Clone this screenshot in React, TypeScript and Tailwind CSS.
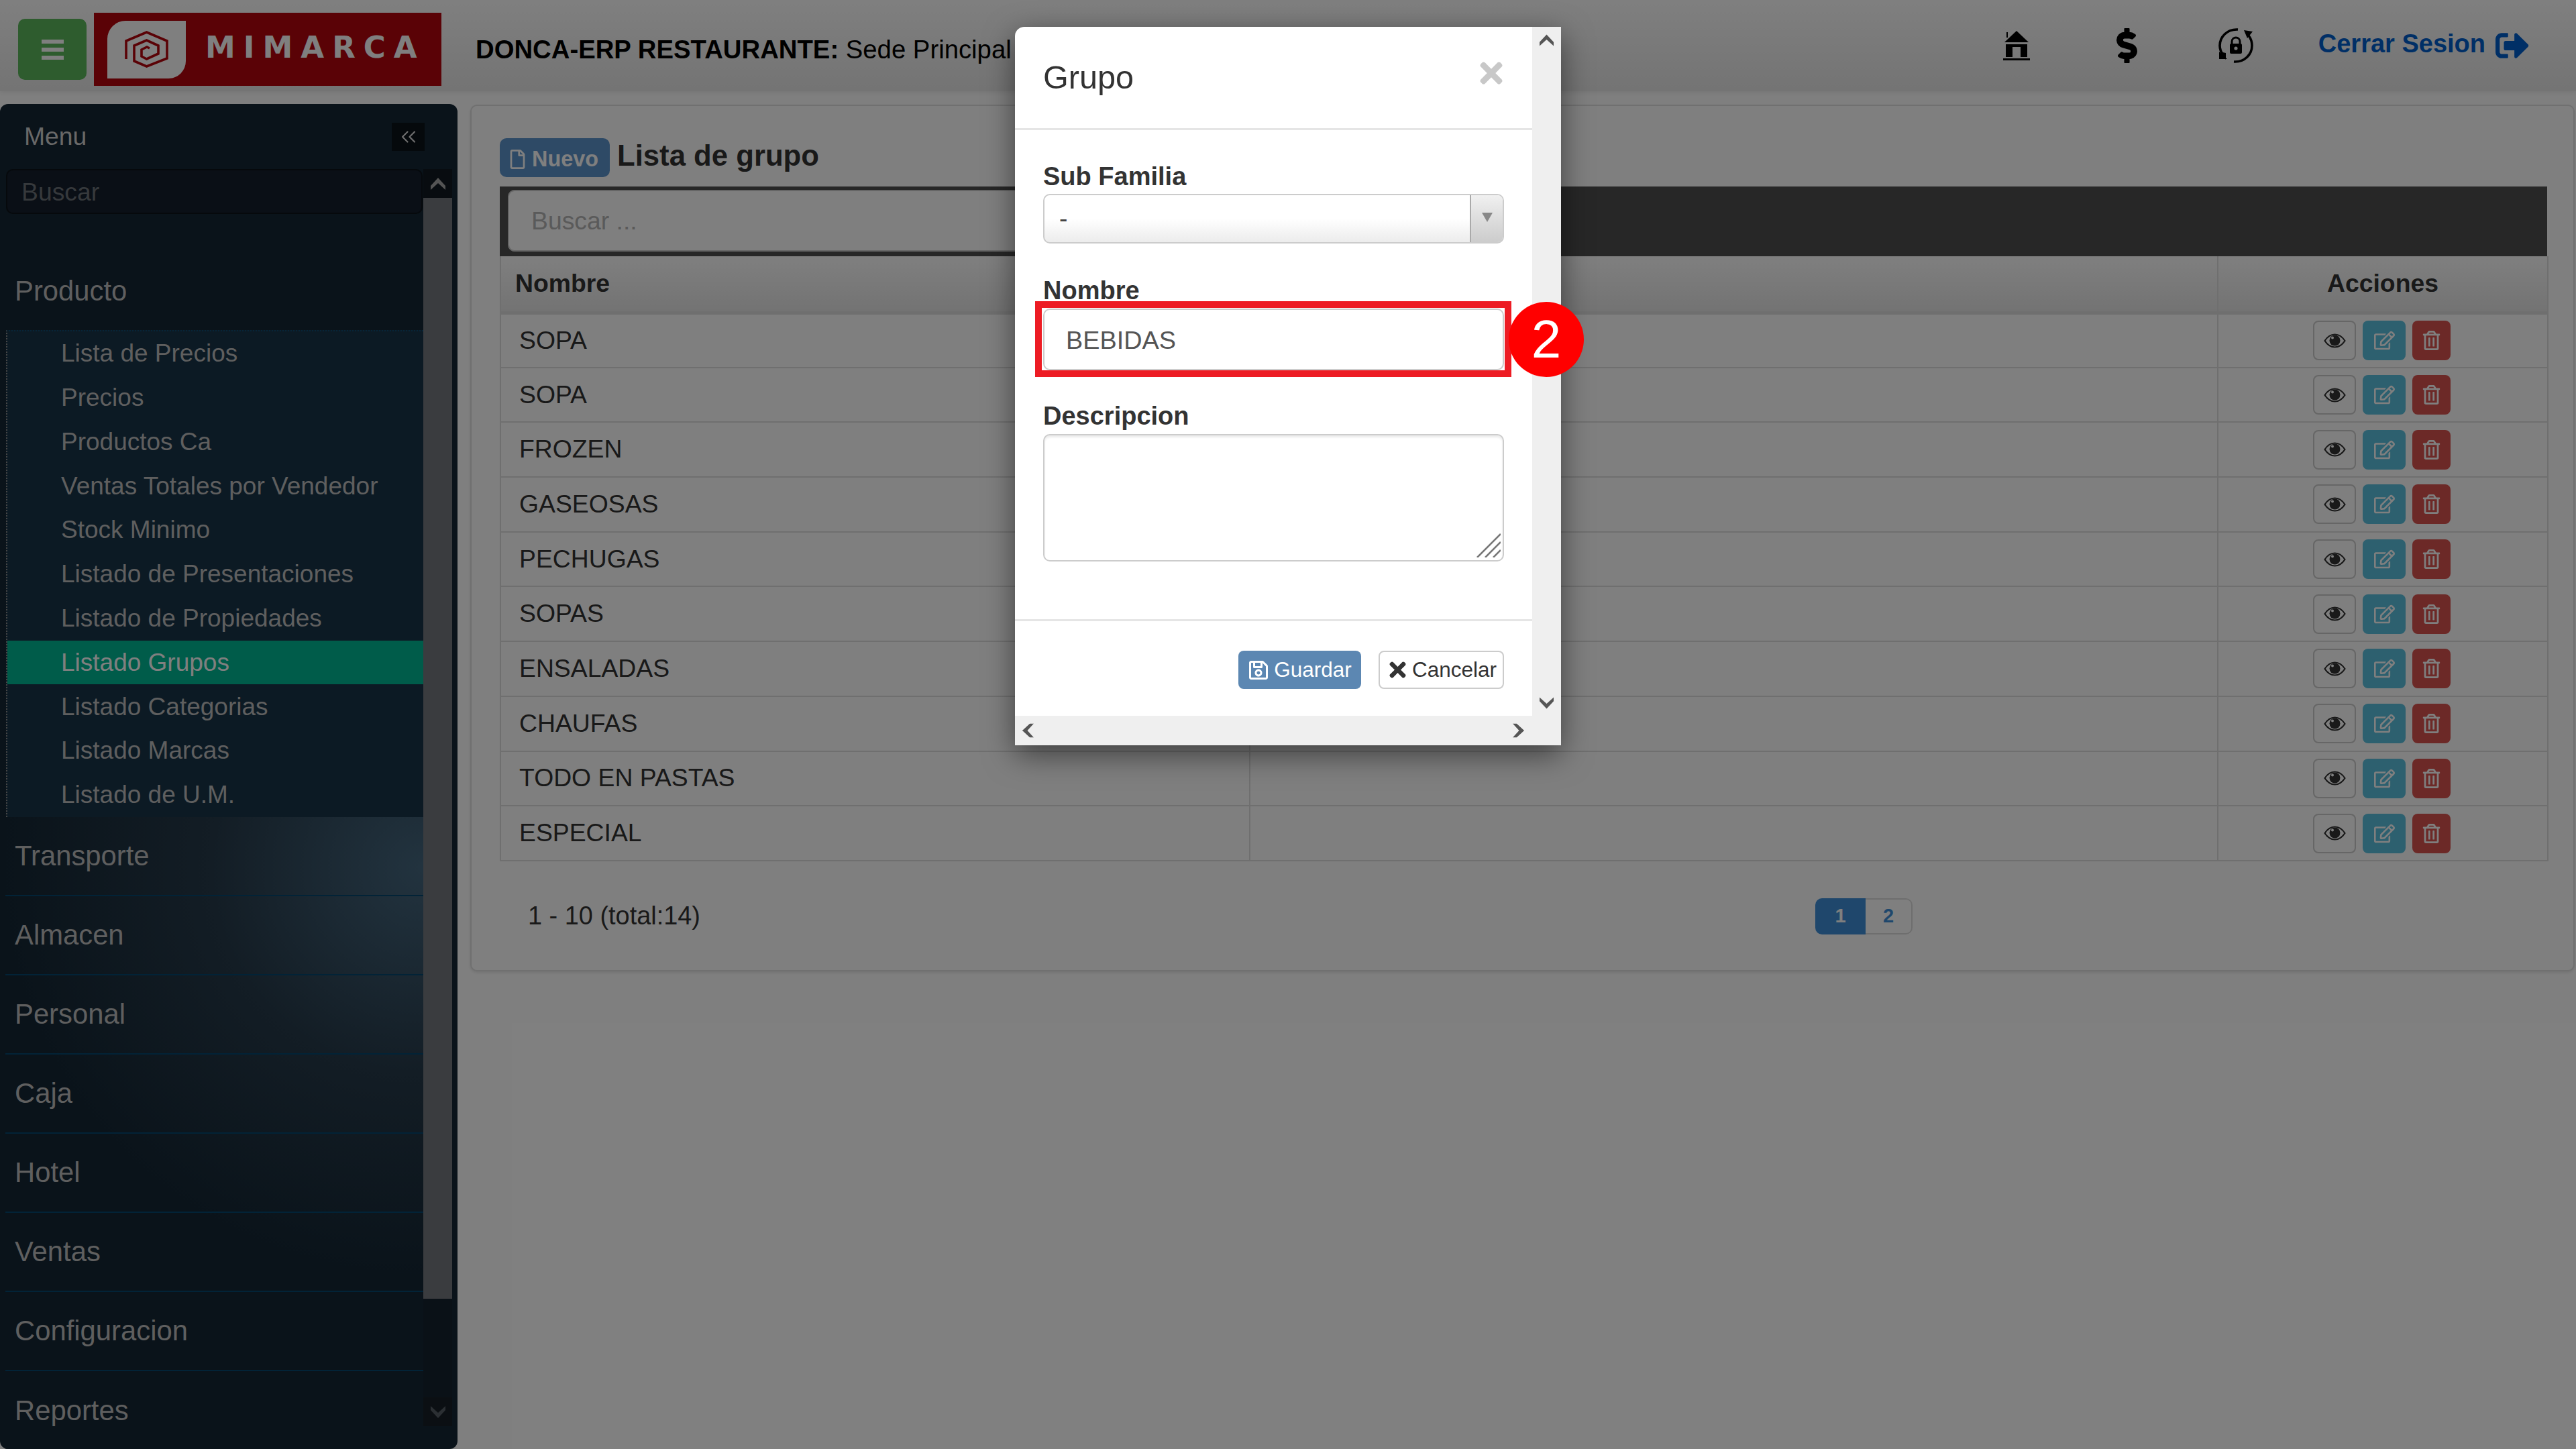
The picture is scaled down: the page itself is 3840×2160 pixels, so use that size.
import React from "react";
import { ChevronsLeft } from "lucide-react";
import {
	FaDollarSign,
	FaRegEdit,
	FaRegFile,
	FaRegSave,
	FaRegTrashAlt,
	FaSignOutAlt,
	FaTimes,
} from "react-icons/fa";

const subItems = [
	"Lista de Precios",
	"Precios",
	"Productos Ca",
	"Ventas Totales por Vendedor",
	"Stock Minimo",
	"Listado de Presentaciones",
	"Listado de Propiedades",
	"Listado Grupos",
	"Listado Categorias",
	"Listado Marcas",
	"Listado de U.M.",
];

const menuItems = ["Transporte", "Almacen", "Personal", "Caja", "Hotel", "Ventas", "Configuracion", "Reportes"];

const rows = ["SOPA", "SOPA", "FROZEN", "GASEOSAS", "PECHUGAS", "SOPAS", "ENSALADAS", "CHAUFAS", "TODO EN PASTAS", "ESPECIAL"];

const HomeIcon = () => (
	<svg viewBox="0 0 40 44" className="w-[40px] h-[44px]" fill="#000">
		<path d="M20 0 L38 17 L2 17 Z" />
		<rect x="5" y="2" width="2" height="8" />
		<path fillRule="evenodd" d="M4 20 H36 V39 H26 V24 H14 V39 H4 Z" />
		<rect x="0" y="41" width="40" height="3" />
	</svg>
);

const LockRefreshIcon = () => (
	<svg viewBox="0 0 54 54" className="w-[54px] h-[54px]">
		<path d="M30 3 C14 2 3 14 3 27 C3 32 5 37 8 41" fill="none" stroke="#000" strokeWidth="3.6" />
		<path d="M2 36 L14 47 L2 47 Z M3 36 L12 38 L12 48 Z" fill="#000" />
		<path d="M24 51 C40 52 51 40 51 27 C51 21 49 16 46 12" fill="none" stroke="#000" strokeWidth="3.6" />
		<path d="M39 4 L52 6 L44 16 Z" fill="#000" />
		<path d="M21 25 V21 C21 13 33 13 33 21 V25" fill="none" stroke="#000" strokeWidth="3" />
		<rect x="18" y="24" width="18" height="15" rx="2" fill="#000" />
		<circle cx="27" cy="31" r="2.6" fill="#f2f2f2" />
	</svg>
);

const EyeIcon = () => (
	<svg viewBox="0 0 33 22" className="w-[33px] h-[22px]">
		<path d="M1.5 11 C6 4 11 1.5 16.5 1.5 C22 1.5 27 4 31.5 11 C27 18 22 20.5 16.5 20.5 C11 20.5 6 18 1.5 11 Z" fill="none" stroke="#333" strokeWidth="2.2" />
		<circle cx="16.5" cy="10.5" r="8" fill="#333" />
		<circle cx="13" cy="6.5" r="2" fill="#fff" />
	</svg>
);

const LogoMark = () => (
	<svg viewBox="0 0 117 86" className="w-[117px] h-[86px]">
		<path d="M27 0 H117 V60 A26 26 0 0 1 91 86 H0 V27 A27 27 0 0 1 27 0 Z" fill="#fff" />
		<path
			d="M28 57 V30 L58.6 17 L89 30 V56 L58.6 68 L40 60 V37 L58.6 29 L76 37 V49 L58.6 57 L51 53 V43 L59 39 L63 41"
			fill="none"
			stroke="#b4040c"
			strokeWidth="3.6"
		/>
	</svg>
);

const GripIcon = () => (
	<svg viewBox="0 0 36 36" className="absolute right-[3px] bottom-[4px] w-[36px] h-[36px]" stroke="#777" strokeWidth="2.6">
		<path d="M1 36 L36 1 M13 36 L36 13 M25 36 L36 25" />
	</svg>
);

// scrollbar arrow, points up, rotate it for the other directions
const ScrollArrow = ({ className }: { className: string }) => (
	<svg viewBox="0 0 22 18" className={className} fill="currentColor">
		<path d="M11 0 L22 12 L22 18 L11 8 L0 18 L0 12 Z" />
	</svg>
);

export default function App() {
	return (
		<div className="relative w-screen h-screen overflow-hidden bg-white font-['Liberation_Sans',sans-serif] text-[37.33px] text-[#333]">
			<header className="flex items-center h-[136px] pt-[11px] pl-[27px] pr-[70px] bg-gradient-to-b from-white to-[#e8e8e8] shadow-[0_2px_8px_rgba(0,0,0,0.08)]">
				<button className="flex flex-col items-center justify-center gap-[6px] w-[102px] h-[91px] rounded-[10px] bg-[#5cb85c]">
					<span className="w-[33px] h-[6px] bg-white" />
					<span className="w-[33px] h-[6px] bg-white" />
					<span className="w-[33px] h-[6px] bg-white" />
				</button>
				<div className="flex items-center w-[518px] h-[109px] ml-[11px] pl-[20px] bg-[#b4040c]">
					<LogoMark />
					<span className="ml-[29px] mb-[6px] font-['DejaVu_Sans',sans-serif] text-[45px] leading-none font-bold tracking-[12px] text-white">MIMARCA</span>
				</div>
				<div className="ml-[51px] pt-[1px] text-black text-[38.3px] whitespace-nowrap">
					<span className="font-bold">DONCA-ERP RESTAURANTE: </span>
					<span>Sede Principal</span>
				</div>
				<div className="flex items-center ml-auto mb-[11px]">
					<HomeIcon />
					<FaDollarSign className="w-[35px] h-[52px] ml-[127px] text-black" stroke="#000" strokeWidth={16} />
					<div className="ml-[118px]">
						<LockRefreshIcon />
					</div>
					<span className="ml-[96px] mb-[6px] font-bold text-[38px] text-[#005ecc] whitespace-nowrap">Cerrar Sesion</span>
					<FaSignOutAlt className="w-[50px] h-[50px] ml-[15px] text-[#005ecc]" />
				</div>
			</header>

			<div className="flex pt-[19px]">
				<aside className="flex flex-col w-[682px] h-[2005px] rounded-[12px] bg-[#142634] overflow-hidden shrink-0">
					<div className="flex items-center justify-between h-[97px] pl-[36px] pr-[49px]">
						<span className="text-[#d0d0d0]">Menu</span>
						<button className="flex items-center justify-center w-[49px] h-[42px] bg-[#0a1218]">
							<ChevronsLeft size={36} strokeWidth={1.5} className="text-[#d8d8d8]" />
						</button>
					</div>
					<div className="flex flex-1 pr-[8px] min-h-0">
						<div className="flex flex-col w-[631px] min-h-0">
							<input
								readOnly
								placeholder="Buscar"
								className="w-[621px] h-[67px] shrink-0 ml-[9px] pl-[21px] pt-[1px] rounded-[10px] border-2 border-[#0c1218] bg-[#141e2c] placeholder:text-[#6c7278]"
							/>
							<div className="flex items-center h-[118px] shrink-0 mt-[55px] pl-[22px] pt-[2px] text-[41.8px] text-[#bebebe]">Producto</div>
							<ul className="ml-[9px] shrink-0 border-l-2 border-t-2 border-dotted border-l-[#8a8a8a] border-t-[#0f4a70] bg-[#183448] text-[37px] text-[#bebebe]">
								{subItems.map((item) => (
									<li
										key={item}
										className={
											item === "Listado Grupos"
												? "flex items-center h-[65.8px] pl-[80px] bg-[#00b894] text-white"
												: "flex items-center h-[65.8px] pl-[80px]"
										}
									>
										{item}
									</li>
								))}
							</ul>
							<ul className="ml-[8px] shrink-0 bg-[radial-gradient(ellipse_640px_620px_at_100%_8%,#45677f_0%,#263a4a_50%,#142634_100%)] text-[41.8px] text-[#bebebe]">
								{menuItems.map((item) => (
									<li key={item} className="flex items-center h-[118px] pl-[14px] pt-[2px] border-b-2 border-[#04466f] last:border-b-0">
										{item}
									</li>
								))}
							</ul>
						</div>
						<div className="flex flex-col w-[43px] h-[1874px] shrink-0 bg-[#14222e]">
							<div className="flex items-center justify-center h-[43px] bg-[#101820] text-[#a8a8a8]">
								<ScrollArrow className="w-[22px] h-[20px]" />
							</div>
							<div className="h-[1641px] bg-[#74787f]" />
							<div className="h-[147px]" />
							<div className="flex items-center justify-center h-[43px] bg-[#161f26] text-[#565e66]">
								<ScrollArrow className="w-[22px] h-[20px] rotate-180" />
							</div>
						</div>
					</div>
				</aside>

				<main className="w-[3137px] h-[1292px] ml-[19px] mt-[1px] pt-[48px] px-[42px] rounded-[10px] border-2 border-[#e0e0e0] bg-white shadow-[0_2px_4px_rgba(0,0,0,0.1)]">
					<div className="flex items-start h-[72px]">
						<span className="flex items-center gap-[7px] w-[164px] h-[58px] pl-[12px] pt-[4px] rounded-[10px] bg-[#5c94cc] text-white font-bold text-[32.4px]">
							<FaRegFile size={29} />
							Nuevo
						</span>
						<h1 className="ml-[11px] mt-[-7px] text-[43.7px] font-bold">Lista de grupo</h1>
					</div>
					<div className="w-[3052px] h-[104px] pl-[12px] pt-[5px] bg-[#4e4e4e]">
						<input readOnly placeholder="Buscar ..." className="w-[1400px] h-[92px] pl-[33px] rounded-[10px] border-2 border-[#ccc] bg-white placeholder:text-[#b4b4b4]" />
					</div>
					<table className="w-[3052px] table-fixed border-collapse">
						<colgroup>
							<col className="w-[1117px]" />
							<col className="w-[1443px]" />
							<col className="w-[492px]" />
						</colgroup>
						<thead>
							<tr className="h-[84px] bg-gradient-to-b from-white to-[#e6e6e6]">
								<th className="pl-[21px] text-left border-2 border-t-0 border-b-[5px] border-[#dedede]">Nombre</th>
								<th className="border-2 border-t-0 border-b-[5px] border-[#dedede]" />
								<th className="text-center font-bold border-2 border-t-0 border-b-[5px] border-[#dedede]">Acciones</th>
							</tr>
						</thead>
						<tbody>
							{rows.map((row, i) => (
								<tr key={i} className="h-[81.7px]">
									<td className="pl-[27px] border-2 border-[#dedede]">{row}</td>
									<td className="border-2 border-[#dedede]" />
									<td className="border-2 border-[#dedede]">
										<div className="flex justify-center gap-[10px] pr-[3px]">
											<span className="flex items-center justify-center w-[64px] h-[59px] rounded-[8px] border-2 border-[#ccc] bg-white">
												<EyeIcon />
											</span>
											<span className="flex items-center justify-center w-[64px] h-[59px] rounded-[8px] bg-[#5bc0de] text-white">
												<FaRegEdit size={31} />
											</span>
											<span className="flex items-center justify-center w-[57px] h-[59px] rounded-[8px] bg-[#d9534f] text-white">
												<FaRegTrashAlt size={29} />
											</span>
										</div>
									</td>
								</tr>
							))}
						</tbody>
					</table>
					<div className="flex items-center h-[54px] mt-[55px] pl-[42px]">
						<span className="w-[1919px] shrink-0 text-[37.9px]">1 - 10 (total:14)</span>
						<div className="flex h-[54px] text-[29px] font-bold">
							<span className="flex items-center justify-center w-[75px] rounded-l-[10px] bg-[#3f8fd8] text-white">1</span>
							<span className="flex items-center justify-center w-[70px] rounded-r-[10px] border-2 border-l-0 border-[#ddd] text-[#3f8fd8]">2</span>
						</div>
					</div>
				</main>
			</div>

			<div className="absolute inset-0 bg-black/50">
				<div className="absolute left-[1513px] top-[40px] flex flex-col w-[814px] h-[1071px] rounded-tl-[14px] bg-white shadow-[0_14px_45px_rgba(0,0,0,0.5)]">
					<div className="flex flex-1 min-h-0">
						<div className="w-[771px] shrink-0">
							<div className="relative flex items-center h-[154px] pl-[42px] border-b-[3px] border-[#e5e5e5] text-[48.6px]">
								Grupo
								<FaTimes className="absolute left-[686px] top-[45px] w-[48px] h-[48px] text-[#c8c8c8]" />
							</div>
							<div className="px-[42px] pt-[50px] font-bold">
								<label className="block h-[38px] leading-[38px] text-[38px]">Sub Familia</label>
								<div className="flex h-[74px] mt-[7px] rounded-[10px] border-2 border-[#ccc] overflow-hidden bg-gradient-to-b from-white via-white to-[#ececec] font-normal">
									<span className="flex-1 pl-[22px] pt-[7px] text-[#444]">-</span>
									<span className="flex items-center justify-center w-[49px] border-l-2 border-[#aaa] bg-gradient-to-b from-[#f0f0f0] to-[#cccccc]">
										<span className="w-0 h-0 mb-[4px] border-x-[8px] border-t-[14px] border-x-transparent border-t-[#888]" />
									</span>
								</div>
								<label className="block h-[38px] mt-[51px] leading-[38px] text-[38px]">Nombre</label>
								<div className="relative mt-[8px] font-normal">
									<input readOnly value="BEBIDAS" className="block w-[687px] h-[92px] pl-[32px] pt-[2px] rounded-[10px] border-2 border-[#ccc] text-[#555] text-[37.8px]" />
									<div className="absolute left-[-12px] top-[-11px] w-[710px] h-[113px] border-[10px] border-[#ed1c24]" />
									<div className="absolute left-[694px] top-[-10px] flex items-center justify-center w-[112px] h-[112px] rounded-full bg-[#ff0000] text-white text-[80px]">2</div>
								</div>
								<label className="block h-[38px] mt-[49px] leading-[38px] text-[38px]">Descripcion</label>
								<div className="relative mt-[8px] h-[190px] rounded-[10px] border-2 border-[#ccc] shadow-[inset_0_3px_3px_rgba(0,0,0,0.08)]">
									<GripIcon />
								</div>
							</div>
							<div className="flex justify-end gap-[26px] h-[142px] mt-[86px] pt-[44px] pr-[42px] border-t-[3px] border-[#e5e5e5] text-[31.5px]">
								<button className="flex items-center justify-center gap-[7px] w-[183px] h-[57px] rounded-[8px] bg-[#5c87b2] text-white">
									<FaRegSave size={32} />
									Guardar
								</button>
								<button className="flex items-center justify-center gap-[4px] w-[187px] h-[57px] rounded-[8px] border-2 border-[#ccc] text-[#333]">
									<FaTimes size={35} />
									Cancelar
								</button>
							</div>
						</div>
						<div className="flex flex-col items-center justify-between w-[43px] pt-[11px] pb-[10px] bg-[#efefef] text-[#555]">
							<ScrollArrow className="w-[21px] h-[18px]" />
							<ScrollArrow className="w-[21px] h-[18px] rotate-180" />
						</div>
					</div>
					<div className="flex items-center justify-between h-[44px] pl-[9px] pr-[53px] bg-[#efefef] text-[#555]">
						<ScrollArrow className="w-[21px] h-[18px] -rotate-90" />
						<ScrollArrow className="w-[21px] h-[18px] rotate-90" />
					</div>
				</div>
			</div>
		</div>
	);
}
